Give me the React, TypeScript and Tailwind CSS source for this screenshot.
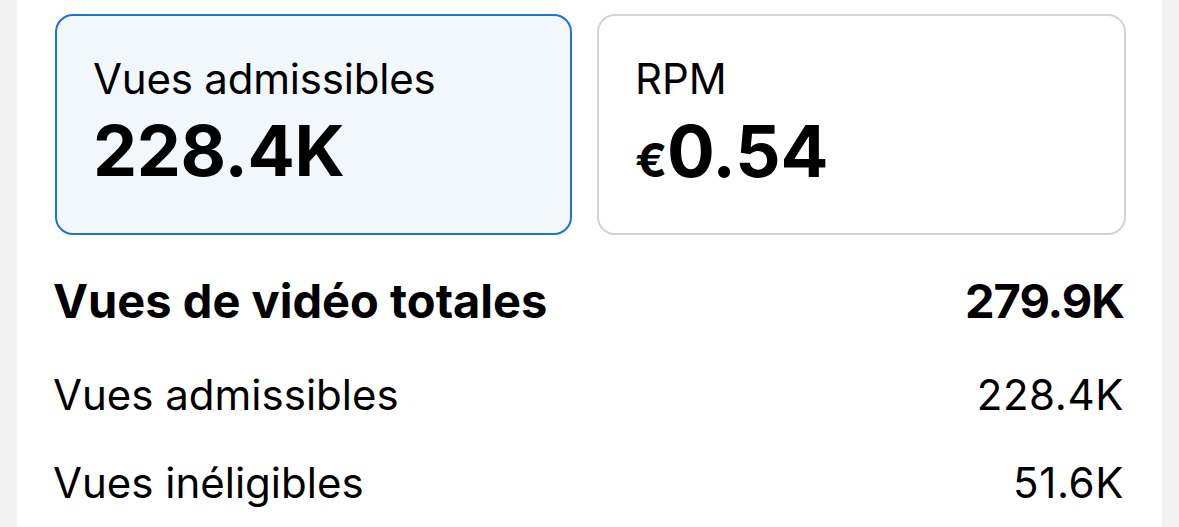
import React from "react";

const font = { fontFamily: "Inter, 'Noto Sans', sans-serif" };

export default function App() {
  return (
    <div className="w-[1179px] h-[527px] bg-[#f2f2f2] overflow-hidden text-black" style={font}>
      <div className="ml-[17px] w-[1145px] h-full bg-white">
        <div className="flex gap-[25px] pt-[14px] pl-[38px] pr-[36px]">
          <div className="w-[517px] h-[221px] rounded-[18px] border-[2.5px] border-[#1a73d6] bg-[#f2f7fc] pl-[36px] pt-[39px]">
            <div className="text-[42px] leading-[48px] tracking-[-0.2px]">Vues admissibles</div>
            <div className="mt-[8px] text-[70px] leading-[80px] font-bold tracking-[-0.3px]">228.4K</div>
          </div>
          <div className="flex-1 h-[221px] rounded-[18px] border-[2.5px] border-[#d4d4d4] bg-white pl-[36px] pt-[39px]">
            <div className="text-[42px] leading-[48px]">RPM</div>
            <div className="mt-[8px] leading-[80px] font-bold tracking-[-0.3px]">
              <span className="text-[47px]">€</span>
              <span className="text-[71px]">0.54</span>
            </div>
          </div>
        </div>
        <div className="pl-[36px] pr-[38px] pt-[38px]">
          <div className="flex justify-between text-[47px] leading-[56px] font-bold">
            <span>Vues de vidéo totales</span>
            <span className="tracking-[-1px]">279.9K</span>
          </div>
          <div className="mt-[38px] flex justify-between text-[42px] leading-[56px]">
            <span>Vues admissibles</span>
            <span className="tracking-[0.6px]">228.4K</span>
          </div>
          <div className="mt-[32px] flex justify-between text-[42px] leading-[56px]">
            <span>Vues inéligibles</span>
            <span className="tracking-[0.6px]">51.6K</span>
          </div>
        </div>
      </div>
    </div>
  );
}
